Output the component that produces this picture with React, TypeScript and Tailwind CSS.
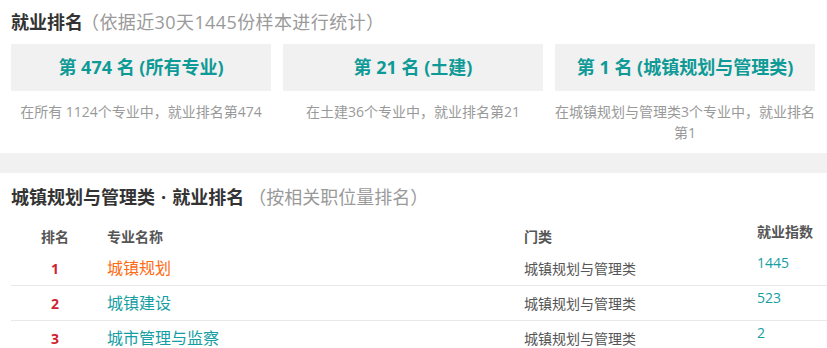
import React from 'react';

const rankCards = [
  { title: '第 474 名 (所有专业)', note: '在所有 1124个专业中，就业排名第474' },
  { title: '第 21 名 (土建)', note: '在土建36个专业中，就业排名第21' },
  { title: '第 1 名 (城镇规划与管理类)', note: '在城镇规划与管理类3个专业中，就业排名第1' },
];

const rows = [
  { rank: 1, name: '城镇规划', category: '城镇规划与管理类', index: '1445', current: true },
  { rank: 2, name: '城镇建设', category: '城镇规划与管理类', index: '523', current: false },
  { rank: 3, name: '城市管理与监察', category: '城镇规划与管理类', index: '2', current: false },
];

const App: React.FC = () => {
  return (
    <div className="w-[827px] h-[348px] overflow-hidden bg-white font-['Open_Sans','Noto_Sans_CJK_SC',sans-serif] text-[#333]">
      {/* overall ranking */}
      <div className="px-[11px] pt-[10px] pb-[10px]">
        <h2 className="text-[18px] leading-[24px] whitespace-nowrap">
          <span className="font-bold text-[#333]">就业排名</span>
          <span className="-ml-[2px] tracking-[0.4px] text-[#9a9a9a]">（依据近30天1445份样本进行统计）</span>
        </h2>
        <div className="mt-[10px] grid w-[804px] grid-cols-3 gap-x-[12px]">
          {rankCards.map((card, i) => (
            <div key={i}>
              <div className="flex h-[47px] items-center justify-center bg-[#f1f1f1] text-[18px] font-bold text-[#0e9a96]">
                {card.title}
              </div>
              <p className="mt-[10px] text-center text-[14px] leading-[21px] text-[#999]">{card.note}</p>
            </div>
          ))}
        </div>
      </div>

      <div className="h-[20px] bg-[#f1f1f1]" />

      {/* category ranking */}
      <div className="pl-[11px] pt-[12px]">
        <h2 className="text-[18px] leading-[24px] whitespace-nowrap">
          <span className="font-bold text-[#333]">
            城镇规划与管理类<span className="mx-[6px]">·</span>就业排名
          </span>
          <span className="ml-[4px] text-[#9a9a9a]">（按相关职位量排名）</span>
        </h2>

        <div className="mt-[12px] w-[816px]">
          <div className="grid h-[30px] grid-cols-[88px_417px_233px_1fr] text-[14px] font-bold text-[#555]">
            <div className="flex items-center justify-center">排名</div>
            <div className="flex items-center pl-[8px]">专业名称</div>
            <div className="flex items-center pl-[8px]">门类</div>
            <div className="flex items-center pl-[8px] pb-[10px]">就业指数</div>
          </div>
          {rows.map((row) => (
            <div
              key={row.rank}
              className="grid h-[35px] grid-cols-[88px_417px_233px_1fr] border-b border-[#e8e8e8] text-[14px]"
            >
              <div className="flex items-center justify-center font-bold text-[#cf2430]">{row.rank}</div>
              <div
                className={
                  row.current
                    ? 'flex items-center pl-[8px] text-[16px] text-[#ff6a13]'
                    : 'flex items-center pl-[8px] text-[16px] text-[#169ea3]'
                }
              >
                {row.name}
              </div>
              <div className="flex items-center pl-[8px] text-[#555]">{row.category}</div>
              <div className="flex items-center pl-[8px] pb-[12px] text-[#169ea3]">{row.index}</div>
            </div>
          ))}
        </div>
      </div>
    </div>
  );
};

export default App;
